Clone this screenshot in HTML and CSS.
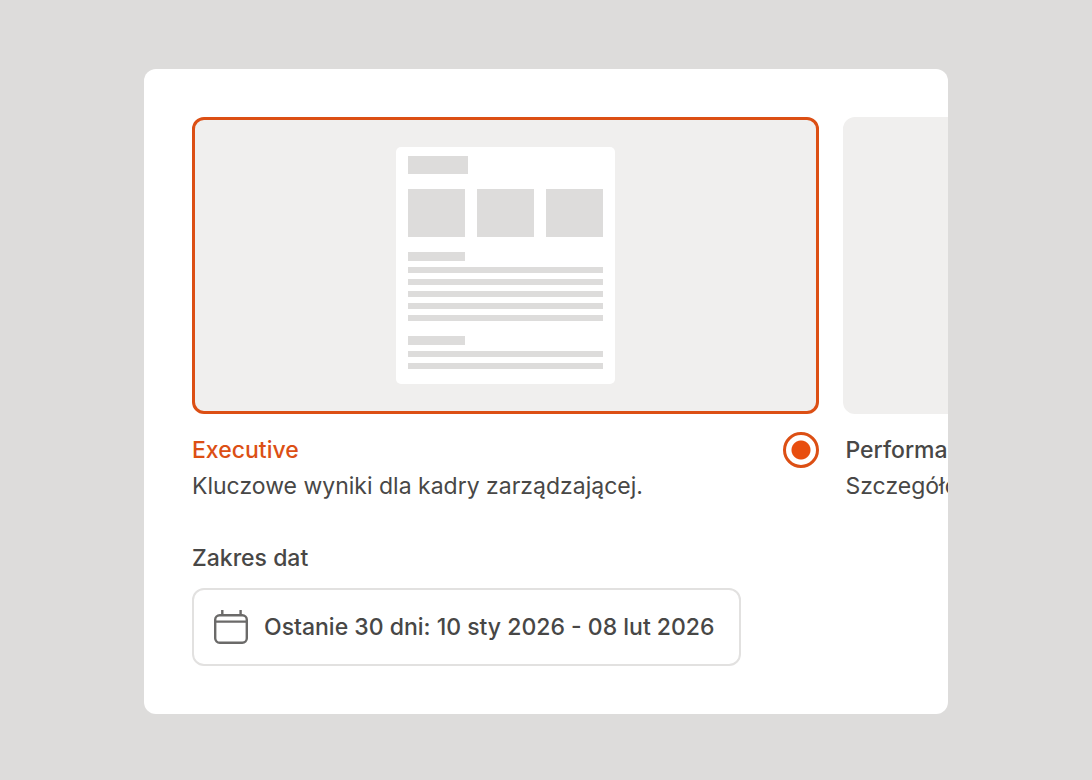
FILE: index.html
```html
<!DOCTYPE html>
<html lang="pl">

<head>
    <meta charset="UTF-8">
    <meta name="viewport" content="width=device-width, initial-scale=1.0">
    <title>Raport</title>
    <link rel="stylesheet" href="styles.css">
</head>

<body>

    <form class="card">
        <div class="options">
            <label class="option">
                <span class="preview selected">
                    <span class="page">
                        <span class="bar title"></span>
                        <span class="tiles">
                            <span class="bar"></span>
                            <span class="bar"></span>
                            <span class="bar"></span>
                        </span>
                        <span class="lines">
                            <span class="bar heading"></span>
                            <span class="bar line"></span>
                            <span class="bar line"></span>
                            <span class="bar line"></span>
                            <span class="bar line"></span>
                            <span class="bar line"></span>
                        </span>
                        <span class="lines">
                            <span class="bar heading"></span>
                            <span class="bar line"></span>
                            <span class="bar line"></span>
                        </span>
                    </span>
                </span>
                <span class="info">
                    <span class="text">
                        <span class="name active">Executive</span>
                        <span class="desc">Kluczowe wyniki dla kadry zarządzającej.</span>
                    </span>
                    <input class="radio" type="radio" name="template" value="executive" checked>
                </span>
            </label>

            <label class="option">
                <span class="preview"></span>
                <span class="info next">
                    <span class="text">
                        <span class="name">Performance</span>
                        <span class="desc">Szczegółowe</span>
                    </span>
                    <input class="radio" type="radio" name="template" value="performance">
                </span>
            </label>
        </div>

        <div class="field">
            <label class="field-label" for="range">Zakres dat</label>
            <button class="date-btn" id="range" type="button">
                <svg width="36" height="36" viewBox="0 0 36 36" fill="none" stroke="#6b6a69" stroke-width="2.4" aria-hidden="true">
                    <rect x="2.2" y="6.2" width="31.6" height="27.6" rx="4.5" />
                    <path d="M2 12.6h32M9.3 1v5M27.6 1v5" />
                </svg>
                <span>Ostanie 30 dni: 10 sty 2026 - 08 lut 2026</span>
            </button>
        </div>
    </form>

</body>

</html>
```
FILE: styles.css
```css
* {
    box-sizing: border-box;
}

body {
    margin: 0;
    min-height: 100vh;
    display: flex;
    align-items: center;
    justify-content: center;
    background-color: #dddcdb;
    color: #484746;
    font-family: Inter, "Liberation Sans", sans-serif;
    font-size: 23px;
    line-height: 36px;
}

.card {
    width: 100%;
    max-width: 1200px;
    margin: 26px 144px 24px;
    padding: 48px 0 48px 48px;
    background-color: white;
    border-radius: 12px;
    overflow: hidden;
}

.options {
    display: flex;
    gap: 24px;
}

.option {
    flex: 0 0 83%;
    display: flex;
    flex-direction: column;
    gap: 18px;
    cursor: pointer;
}

.preview {
    flex: 1;
    display: flex;
    justify-content: center;
    padding: 27px;
    background-color: #f0efee;
    border: 3px solid #f0efee;
    border-radius: 12px;
}

.preview.selected {
    border-color: #dc4f14;
}

/* miniature of the report page */
.page {
    width: 219px;
    display: flex;
    flex-direction: column;
    gap: 15px;
    padding: 9px 12px 15px;
    background-color: white;
    border-radius: 5px;
}

.bar {
    background-color: #dddcdb;
}

.title {
    width: 60px;
    height: 18px;
}

.tiles {
    display: grid;
    grid-template-columns: repeat(3, 1fr);
    gap: 12px;
    height: 48px;
}

.lines {
    display: flex;
    flex-direction: column;
    gap: 6px;
}

.heading {
    width: 57px;
    height: 9px;
}

.line {
    height: 6px;
}

.info {
    display: flex;
    justify-content: space-between;
    align-items: flex-start;
}

.next {
    padding-left: 2px;
}

.text {
    display: flex;
    flex-direction: column;
}

.name {
    font-weight: 500;
}

.active {
    color: #dc4f14;
}

.radio {
    appearance: none;
    width: 36px;
    height: 36px;
    margin: 0;
    border: 3px solid #dddcdb;
    border-radius: 50%;
}

.radio:checked {
    border-color: #dc4f14;
    background: radial-gradient(circle, #e84e0f 9px, transparent 10px);
}

.field {
    display: flex;
    flex-direction: column;
    align-items: flex-start;
    gap: 12px;
    margin-top: 36px;
}

.field-label {
    font-weight: 500;
}

.date-btn {
    display: flex;
    align-items: center;
    gap: 15px;
    padding: 19px 24px 19px 19px;
    background-color: white;
    color: inherit;
    border: 2px solid #e2e1e0;
    border-radius: 12px;
    font: inherit;
    font-weight: 500;
    cursor: pointer;
}
```
